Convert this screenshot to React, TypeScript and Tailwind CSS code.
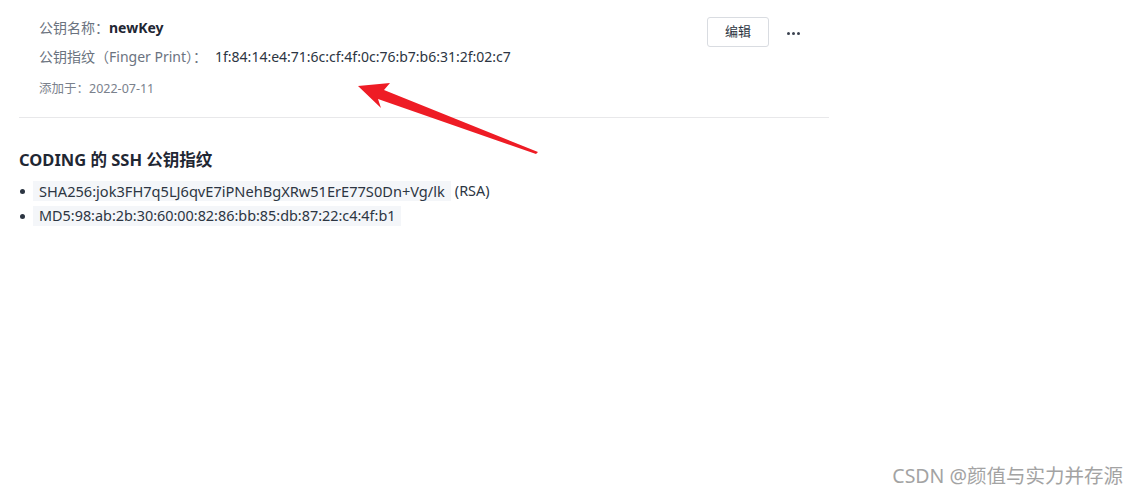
import React from 'react';

const font = { fontFamily: '"Noto Sans", "Noto Sans CJK SC", sans-serif' };

const Arrow: React.FC = () => (
  <svg className="absolute left-0 top-0 pointer-events-none" width="1139" height="496" viewBox="0 0 1139 496">
    <polygon points="358,86 390,83 384,90 538,152 536,154 378,99 381,108" fill="#ee1c25" />
  </svg>
);

const App: React.FC = () => {
  return (
    <div className="relative w-[1139px] h-[496px] bg-white overflow-hidden text-[#2c3542]" style={font}>
      <div className="w-[810px] ml-[19px]">
        <div className="flex justify-between pl-5 pt-[16px] pb-[19px] border-b border-[#e8e8ea]">
          <div className="flex flex-col">
            <div className="flex items-center h-[22px] text-[14px]">
              <span className="text-[#6b7380]">公钥名称：</span>
              <span className="font-bold text-[14px] text-[#1f2733]">newKey</span>
            </div>
            <div className="flex items-center h-[22px] mt-[7px] text-[14px]">
              <span className="text-[#6b7380]">公钥指纹（Finger Print）：</span>
              <span className="text-[#2c3542] ml-[8px]">1f:84:14:e4:71:6c:cf:4f:0c:76:b7:b6:31:2f:02:c7</span>
            </div>
            <div className="flex items-center h-[18px] mt-[13px] text-[12.5px] text-[#7a818c]">添加于：2022-07-11</div>
          </div>
          <div className="flex items-start pr-[29px] pt-[1px]">
            <button className="w-[62px] h-[30px] border border-[#d9dce1] rounded-[3px] text-[13px] text-[#2c3542] bg-white">编辑</button>
            <div className="flex gap-[2px] mt-[15px] ml-[18px]">
              <span className="w-[3px] h-[3px] rounded-full bg-[#3b4350]" />
              <span className="w-[3px] h-[3px] rounded-full bg-[#3b4350]" />
              <span className="w-[3px] h-[3px] rounded-full bg-[#3b4350]" />
            </div>
          </div>
        </div>
        <h2 className="mt-[31px] text-[16.5px] font-bold text-[#1f2733] leading-[22px]">CODING 的 SSH 公钥指纹</h2>
        <ul className="mt-[10px] text-[14.4px] text-[#2c3542]">
          <li className="flex items-center h-[20px]">
            <span className="w-[5px] h-[5px] rounded-full bg-[#2c3542] ml-[1px] mr-[8px]" />
            <span className="bg-[#f4f6f9] px-[6px] leading-[20px] text-[14.6px]">SHA256:jok3FH7q5LJ6qvE7iPNehBgXRw51ErE77S0Dn+Vg/lk</span>
            <span className="ml-[4px]">(RSA)</span>
          </li>
          <li className="flex items-center h-[20px] mt-[5px]">
            <span className="w-[5px] h-[5px] rounded-full bg-[#2c3542] ml-[1px] mr-[8px]" />
            <span className="bg-[#f4f6f9] px-[6px] leading-[20px]">MD5:98:ab:2b:30:60:00:82:86:bb:85:db:87:22:c4:4f:b1</span>
          </li>
        </ul>
      </div>
      <div className="absolute right-[16px] bottom-[6px] text-[19.5px] text-[#a3a3a3]">CSDN @颜值与实力并存源</div>
      <Arrow />
    </div>
  );
};

export default App;
